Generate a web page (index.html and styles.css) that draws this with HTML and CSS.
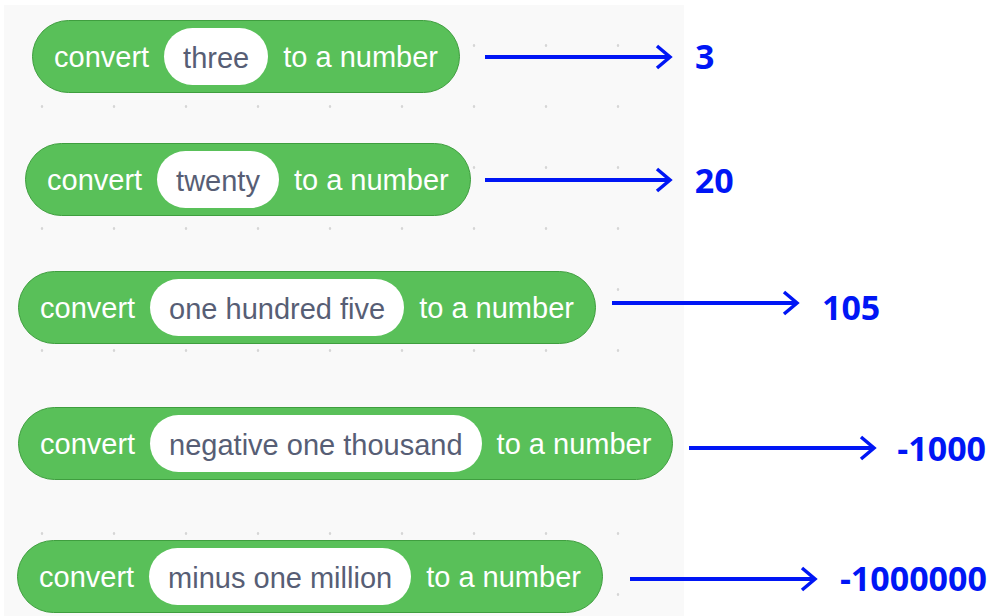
FILE: index.html
```html
<!DOCTYPE html>
<html lang="en">
<head>
  <meta charset="UTF-8">
  <meta name="viewport" content="width=device-width, initial-scale=1.0">
  <title>Convert to a number</title>
  <link rel="stylesheet" href="styles.css">
</head>
<body>

<div class="canvas">

  <div class="row row-1">
    <div class="block">
      <span class="label">convert</span>
      <span class="input">three</span>
      <span class="label">to a number</span>
    </div>
    <svg class="arrow" width="190" height="26" viewBox="0 0 190 26">
      <line x1="0" y1="13" x2="185" y2="13" />
      <polyline points="172,2 185,13 172,24" />
    </svg>
    <span class="result">3</span>
  </div>

  <div class="row row-2">
    <div class="block">
      <span class="label">convert</span>
      <span class="input">twenty</span>
      <span class="label">to a number</span>
    </div>
    <svg class="arrow" width="190" height="26" viewBox="0 0 190 26">
      <line x1="0" y1="13" x2="185" y2="13" />
      <polyline points="172,2 185,13 172,24" />
    </svg>
    <span class="result">20</span>
  </div>

  <div class="row row-3">
    <div class="block">
      <span class="label">convert</span>
      <span class="input">one hundred five</span>
      <span class="label">to a number</span>
    </div>
    <svg class="arrow" width="190" height="26" viewBox="0 0 190 26">
      <line x1="0" y1="13" x2="185" y2="13" />
      <polyline points="172,2 185,13 172,24" />
    </svg>
    <span class="result">105</span>
  </div>

  <div class="row row-4">
    <div class="block">
      <span class="label">convert</span>
      <span class="input">negative one thousand</span>
      <span class="label">to a number</span>
    </div>
    <svg class="arrow" width="190" height="26" viewBox="0 0 190 26">
      <line x1="0" y1="13" x2="185" y2="13" />
      <polyline points="172,2 185,13 172,24" />
    </svg>
    <span class="result">-1000</span>
  </div>

  <div class="row row-5">
    <div class="block">
      <span class="label">convert</span>
      <span class="input">minus one million</span>
      <span class="label">to a number</span>
    </div>
    <svg class="arrow" width="190" height="26" viewBox="0 0 190 26">
      <line x1="0" y1="13" x2="185" y2="13" />
      <polyline points="172,2 185,13 172,24" />
    </svg>
    <span class="result">-1000000</span>
  </div>

</div>

</body>
</html>
```

FILE: styles.css
```css
* {
  box-sizing: border-box;
}

body {
  margin: 0;
  padding: 5px 0 0 4px;
  background-color: white;
  font-family: 'Liberation Sans', Arial, sans-serif;
  overflow: hidden;
}

.canvas {
  width: 680px;
  height: 611px;
  background-color: #f9f9f9;
  background-image: radial-gradient(circle, #d6d6d6 1px, transparent 1.6px);
  background-size: 72px 61px;
  background-position: 2px 10px;
  padding-top: 15px;
}

.row {
  display: flex;
  align-items: center;
  width: max-content;
}

.block {
  display: flex;
  align-items: center;
  gap: 15px;
  height: 73px;
  padding: 0 21px;
  background-color: #59c059;
  border: 1px solid #3f9e3f;
  border-radius: 37px;
}

.label {
  padding-top: 2px;
  color: white;
  font-size: 29px;
  white-space: nowrap;
}

.input {
  display: flex;
  align-items: center;
  height: 57px;
  padding: 3px 19px 0;
  background-color: white;
  border-radius: 29px;
  color: #575e75;
  font-size: 29px;
  white-space: nowrap;
}

.arrow {
  display: block;
}

.arrow line,
.arrow polyline {
  stroke: #0016f5;
  fill: none;
}

.arrow line {
  stroke-width: 4;
}

.arrow polyline {
  stroke-width: 3.5;
}

.result {
  margin-left: 18px;
  font-family: 'Open Sans', sans-serif;
  font-weight: bold;
  font-size: 34px;
  color: #0016f5;
}

/* each row sits where its screenshot put it */
.row-1 { margin-left: 28px; }
.row-1 .arrow { margin-left: 25px; }
.row-1 .result { margin-left: 20px; margin-bottom: 2px; }

.row-2 { margin-left: 21px; margin-top: 50px; }
.row-2 .arrow { margin-left: 14px; }
.row-2 .result { margin-left: 20px; }

.row-3 { margin-left: 14px; margin-top: 55px; }
.row-3 .arrow { margin-left: 16px; margin-bottom: 9px; }
.row-3 .result { margin-left: 20px; margin-bottom: 2px; }

.row-4 { margin-left: 14px; margin-top: 63px; }
.row-4 .arrow { margin-left: 16px; margin-top: 9px; }
.row-4 .result { margin-top: 8px; }

.row-5 { margin-left: 13px; margin-top: 60px; }
.row-5 .arrow { margin-left: 27px; margin-top: 5px; }
.row-5 .result { margin-left: 20px; margin-top: 3px; }
```
